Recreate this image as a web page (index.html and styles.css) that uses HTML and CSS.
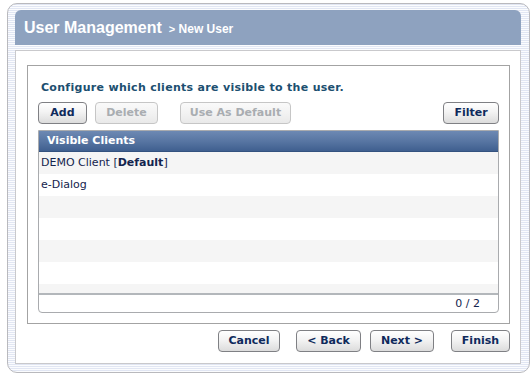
FILE: index.html
```html
<!DOCTYPE html>
<html>
<head>
<meta charset="utf-8">
<link rel="stylesheet" href="styles.css">
</head>
<body>
<div class="frame">
  <div class="header">
    <span class="title">User Management</span>
    <span class="crumb"><span class="gt">&gt;</span> New User</span>
  </div>
  <div class="body">
    <div class="panel">
      <p class="intro">Configure which clients are visible to the user.</p>
      <div class="toolbar">
        <button class="btn w-add">Add</button>
        <button class="btn w-del" disabled>Delete</button>
        <button class="btn w-def" disabled>Use As Default</button>
        <span class="spacer"></span>
        <button class="btn w-filter">Filter</button>
      </div>
      <div class="grid">
        <div class="grid-head">Visible Clients</div>
        <div class="rows">
          <div class="row">DEMO Client [<b>Default</b>]</div>
          <div class="row">e-Dialog</div>
          <div class="row"></div>
          <div class="row"></div>
          <div class="row"></div>
          <div class="row"></div>
          <div class="row"></div>
        </div>
        <div class="grid-foot">0 / 2</div>
      </div>
    </div>
    <div class="actions">
      <button class="btn w-cancel">Cancel</button>
      <button class="btn w-back">&lt; Back</button>
      <button class="btn w-next">Next &gt;</button>
      <button class="btn w-finish">Finish</button>
    </div>
  </div>
</div>
</body>
</html>
```

FILE: styles.css
```css
* { box-sizing: border-box; }
html, body { margin: 0; padding: 0; background: #fff; }
body { font-family: "DejaVu Sans", Verdana, sans-serif; font-size: 11px; }

.frame {
  margin: 3px 3px 0 7px;
  width: 523px;
  height: 370px;
  border: 1px solid #b9b9bd;
  border-radius: 10px;
  padding: 6px 8px 8px 7px;
  background: repeating-linear-gradient(to bottom, #e1e6f3 0, #e1e6f3 1px, #fbfcfe 1px, #fbfcfe 2px);
  display: flex;
  flex-direction: column;
}

.header {
  height: 35px;
  background: #8ea2bf;
  border-radius: 6px 6px 0 0;
  padding: 0 9px;
  display: flex;
  align-items: baseline;
  gap: 7px;
  color: #fff;
  font-family: "Liberation Sans", Arial, sans-serif;
  font-weight: bold;
  line-height: 35px;
}
.title { font-size: 16px; }
.crumb { font-size: 12px; }
.gt { font-size: 11px; }

.body {
  margin-top: 5px;
  flex: 1;
  background: #fff;
  border: 1px solid #c9c9cc;
  padding: 14px 10px 0 11px;
  display: flex;
  flex-direction: column;
}

.panel {
  border: 1px solid #a3a3a3;
  padding: 0 10px 10px 10px;
  display: flex;
  flex-direction: column;
}

.intro {
  margin: 15px 0 0 3px;
  height: 14px;
  line-height: 14px;
  font-weight: bold;
  letter-spacing: 0.3px;
  color: #1c4f70;
}

.toolbar {
  margin-top: 7px;
  display: flex;
  align-items: center;
}
.spacer { flex: 1; }

.btn {
  height: 22px;
  padding: 0;
  border: 1px solid #7f8084;
  border-radius: 4px;
  background: linear-gradient(to bottom, #ffffff 0%, #f3f3f3 45%, #dcdcdc 100%);
  font-family: "DejaVu Sans", Verdana, sans-serif;
  font-size: 11px;
  font-weight: bold;
  color: #0f2a5c;
  text-align: center;
  line-height: 20px;
}
.btn:disabled {
  border-color: #c6c6c6;
  color: #a9adb1;
  background: linear-gradient(to bottom, #fafafa 0%, #f2f2f2 50%, #e9e9e9 100%);
}
.w-add { width: 49px; }
.w-del { width: 63px; margin-left: 8px; }
.w-def { width: 111px; margin-left: 22px; }
.w-filter { width: 56px; }
.w-cancel { width: 62px; }
.w-back { width: 65px; margin-left: 16px; }
.w-next { width: 64px; margin-left: 9px; }
.w-finish { width: 59px; margin-left: 17px; }

.grid {
  margin-top: 6px;
  border: 1px solid #a9abae;
  border-radius: 0 0 4px 4px;
  display: flex;
  flex-direction: column;
}
.grid-head {
  height: 21px;
  line-height: 20px;
  padding-left: 8px;
  color: #fff;
  font-weight: bold;
  background: linear-gradient(to bottom, #6d89b3 0%, #5674a1 55%, #3f5f8f 100%);
  border-bottom: 1px solid #34527f;
}
.rows {
  height: 143px;
  overflow: hidden;
  border-bottom: 2px solid #b3b7bb;
}
.row {
  height: 22px;
  line-height: 22px;
  padding-left: 2px;
  color: #14244e;
}
.row:nth-child(odd) { background: #f5f5f5; }
.row:nth-child(even) { background: #fff; }
.row b { color: #14244e; }

.grid-foot {
  height: 17px;
  line-height: 17px;
  text-align: right;
  padding-right: 18px;
  color: #14244e;
}

.actions {
  margin-top: 6px;
  display: flex;
  justify-content: flex-end;
}
```
